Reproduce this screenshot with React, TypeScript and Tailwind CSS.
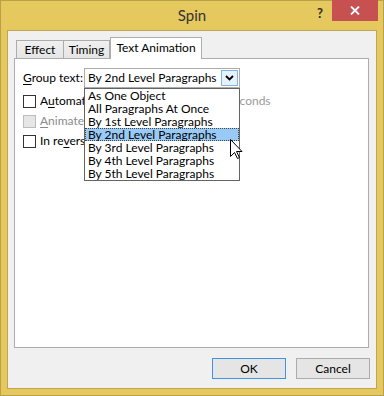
import React from "react";

const items = [
  "As One Object",
  "All Paragraphs At Once",
  "By 1st Level Paragraphs",
  "By 2nd Level Paragraphs",
  "By 3rd Level Paragraphs",
  "By 4th Level Paragraphs",
  "By 5th Level Paragraphs",
];

function Cursor() {
  return (
    <svg
      className="absolute left-[229px] top-[138px] z-30"
      width="13"
      height="21"
      viewBox="0 0 13 21"
    >
      <path
        d="M0.5 0.5 L0.5 17.5 L4.5 13.5 L7.5 19.5 L9.5 18.5 L6.5 12.5 L12 12.5 Z"
        fill="#ffffff"
        stroke="#000000"
        strokeWidth="1"
        strokeLinejoin="miter"
      />
    </svg>
  );
}

export default function App() {
  return (
    <div className="relative w-[384px] h-[396px] border border-[#b9a14b] bg-[#e5c95f] flex flex-col px-[6px] pb-[6px] font-[Lato,'Liberation_Sans',sans-serif] text-[12px] text-black leading-none select-none">
      {/* Title bar */}
      <div className="-mx-[6px] h-[29px] grid grid-cols-[1fr_auto_1fr]">
        <div />
        <div className="flex items-center justify-center text-[15px] text-[#333333] pb-[1px]">
          Spin
        </div>
        <div className="flex justify-end items-start">
          <div className="mt-[6px] mr-[9px] text-[13px] font-bold text-[#2a2a2a]">?</div>
          <div className="-mt-px mr-[5px] w-[46px] h-[21px] bg-[#c75050] flex items-center justify-center">
            <svg width="10" height="9" viewBox="0 0 10 9">
              <path d="M1 0.5 L9 8.5 M9 0.5 L1 8.5" stroke="#ffffff" strokeWidth="1.8" />
            </svg>
          </div>
        </div>
      </div>

      {/* Client area */}
      <div className="flex-1 border border-[#bfa653] bg-[#f0f0f0] flex flex-col pt-[6px]">
        <div className="ml-[6px] w-[355px] flex flex-col">
          {/* Tabs */}
          <div className="relative z-10 flex items-end h-[21px] pl-[2px]">
            <div className="w-[48px] h-[18px] border border-b-0 border-[#acacac] bg-gradient-to-b from-[#f0f0f0] to-[#e5e5e5] flex items-center justify-center">
              Effect
            </div>
            <div className="w-[46px] h-[18px] border border-b-0 border-l-0 border-[#acacac] bg-gradient-to-b from-[#f0f0f0] to-[#e5e5e5] flex items-center justify-center">
              Timing
            </div>
            <div className="w-[92px] h-[22px] -mb-px border border-b-0 border-[#acacac] bg-white flex items-center justify-center pb-[2px]">
              Text Animation
            </div>
          </div>

          {/* Panel */}
          <div className="relative h-[290px] border border-[#acacac] bg-white pt-[9px] pl-[8px]">
            <div className="flex items-center h-[20px]">
              <span className="w-[61px]">
                <span className="underline underline-offset-2">G</span>roup text:
              </span>
              <div className="relative z-20 w-[156px] h-[20px] border border-[#acacac] bg-white flex items-center">
                <span className="flex-1 pl-[3px] whitespace-nowrap">By 2nd Level Paragraphs</span>
                <div className="mr-px w-[17px] h-[16px] border border-[#7eb4ea] bg-[#e5f1fb] flex items-center justify-center">
                  <svg width="9" height="6" viewBox="0 0 9 6">
                    <path d="M1 1 L4.5 4.5 L8 1" stroke="#000000" strokeWidth="1.8" fill="none" />
                  </svg>
                </div>
                {/* Dropdown list */}
                <div className="absolute left-[-1px] top-[19px] w-[156px] border border-[#646464] bg-white flex flex-col">
                  {items.map((it, i) => (
                    <div
                      key={it}
                      className={
                        i === 3
                          ? "h-[13px] pl-[2px] flex items-center whitespace-nowrap bg-[#99c9f5] border border-dotted border-[#444444]"
                          : "h-[13px] pl-[3px] flex items-center whitespace-nowrap"
                      }
                    >
                      {it}
                    </div>
                  ))}
                </div>
              </div>
            </div>

            <div className="mt-[3px] flex items-center h-[20px]">
              <div className="w-[13px] h-[13px] border border-[#333333] bg-white" />
              <div className="ml-[4px] w-[188px] overflow-hidden whitespace-nowrap flex items-center">
                <span>
                  A<span className="underline underline-offset-2">u</span>tomatically after
                </span>
                <div className="ml-[6px] w-[50px] h-[20px] border border-[#cccccc] bg-white" />
              </div>
              <span className="text-[#9a9a9a]">seconds</span>
            </div>

            <div className="flex items-center h-[20px]">
              <div className="w-[13px] h-[13px] border border-[#bcbcbc] bg-[#e6e6e6]" />
              <span className="ml-[4px] text-[#8a8a8a] whitespace-nowrap">
                <span className="underline underline-offset-2">A</span>nimate attached shape
              </span>
            </div>

            <div className="flex items-center h-[20px]">
              <div className="w-[13px] h-[13px] border border-[#333333] bg-white" />
              <span className="ml-[4px] whitespace-nowrap">
                In re<span className="underline underline-offset-2">v</span>erse order
              </span>
            </div>
          </div>
        </div>

        {/* Buttons */}
        <div className="mt-[10px] mr-[6px] flex justify-end gap-[10px]">
          <div className="w-[74px] h-[21px] border border-[#3c94e6] bg-[#e5e5e5] flex items-center justify-center">
            OK
          </div>
          <div className="w-[74px] h-[21px] border border-[#acacac] bg-[#e5e5e5] flex items-center justify-center">
            Cancel
          </div>
        </div>
      </div>

      <Cursor />
    </div>
  );
}
